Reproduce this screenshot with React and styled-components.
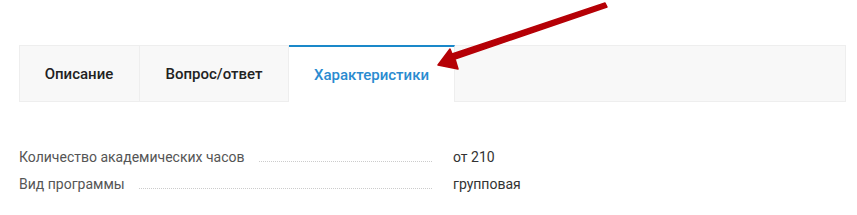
import React, { useState } from "react";
import styled, { createGlobalStyle } from "styled-components";

const GlobalStyle = createGlobalStyle`
  body {
    margin: 0;
    background: #ffffff;
    font-family: 'Roboto', 'Liberation Sans', sans-serif;
  }
`;

const Page = styled.div`
  position: relative;
  width: 857px;
  height: 215px;
  padding: 45px 11px 0 19px;
  box-sizing: border-box;
`;

const TabBar = styled.div`
  display: flex;
  height: 57px;
  background: #f8f8f8;
  border: 1px solid #eeeeee;
  box-sizing: border-box;
`;

const Tab = styled.button`
  display: flex;
  align-items: center;
  justify-content: center;
  width: ${(props) => props.w}px;
  height: ${(props) => (props.active ? "57px" : "55px")};
  margin-top: ${(props) => (props.active ? "-1px" : "0")};
  margin-left: ${(props) => (props.first ? "-1px" : "0")};
  padding: 0;
  border: none;
  border-right: 1px solid #eeeeee;
  border-top: ${(props) => (props.active ? "2px solid #1a88c9" : "none")};
  background: ${(props) => (props.active ? "#ffffff" : "transparent")};
  color: ${(props) => (props.active ? "#2a8bd0" : "#222222")};
  font-family: 'Roboto', 'Liberation Sans', sans-serif;
  font-weight: 500;
  font-size: 15px;
  cursor: pointer;
  box-sizing: border-box;
`;

const Props = styled.div`
  display: flex;
  flex-direction: column;
  gap: 11px;
  margin-top: 47px;
`;

const Row = styled.div`
  display: flex;
  align-items: baseline;
  font-size: 14px;
  line-height: 16px;
  color: #555555;
`;

const Label = styled.div`
  display: flex;
  align-items: baseline;
  width: 413px;
  flex-shrink: 0;

  &::after {
    content: "";
    flex: 1;
    margin-left: 14px;
    border-bottom: 1px dotted #cccccc;
  }
`;

const Value = styled.div`
  margin-left: 21px;
  color: #333333;
`;

const Arrow = styled.svg`
  position: absolute;
  left: 0;
  top: 0;
  pointer-events: none;
`;

const tabs = [
  { title: "Описание", w: 121 },
  { title: "Вопрос/ответ", w: 149 },
  { title: "Характеристики", w: 166 },
];

const rows = [
  { label: "Количество академических часов", value: "от 210" },
  { label: "Вид программы", value: "групповая" },
];

export default function App() {
  const [active, setActive] = useState(2);

  return (
    <Page>
      <GlobalStyle />
      <TabBar>
        {tabs.map((t, i) => (
          <Tab
            key={t.title}
            w={t.w}
            first={i === 0}
            active={i === active}
            onClick={() => setActive(i)}
          >
            {t.title}
          </Tab>
        ))}
      </TabBar>
      <Props>
        {rows.map((r) => (
          <Row key={r.label}>
            <Label>{r.label}</Label>
            <Value>{r.value}</Value>
          </Row>
        ))}
      </Props>
      <Arrow width="857" height="215" viewBox="0 0 857 215">
        <path
          d="M605 3 L607 7 L455 59 L458 69 L438 65 L450 49 L452 54 Z"
          fill="#b50006"
          stroke="#b50006"
          strokeWidth="1.5"
          strokeLinejoin="round"
        />
      </Arrow>
    </Page>
  );
}
